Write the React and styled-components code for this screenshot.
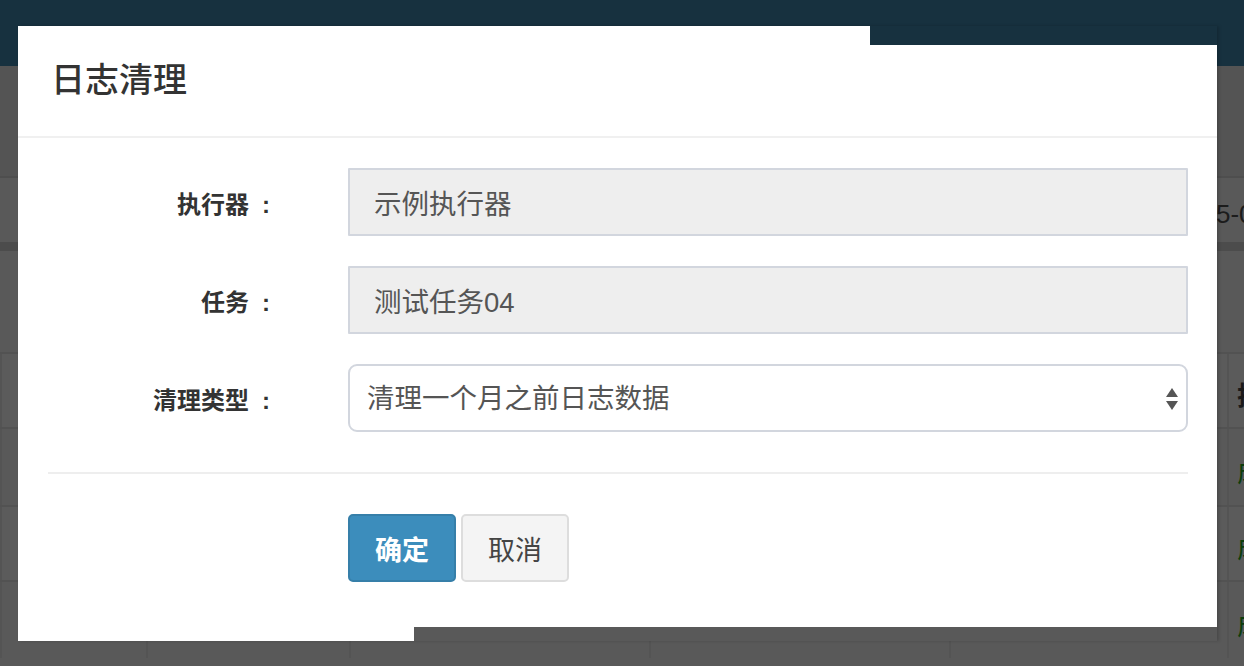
import styled, { createGlobalStyle } from "styled-components";

const GlobalStyle = createGlobalStyle`
  html, body {
    margin: 0;
    padding: 0;
    width: 1244px;
    height: 666px;
    overflow: hidden;
    background: #595959;
    font-family: "Liberation Sans", "Noto Sans CJK SC", sans-serif;
  }
  * { box-sizing: border-box; }
`;

const Stage = styled.div`
  position: relative;
  width: 1244px;
  height: 666px;
  overflow: hidden;
`;

/* page behind the dimmed backdrop */
const Page = styled.div`
  display: flex;
  flex-direction: column;
  width: 1244px;
  height: 666px;
  background: #595959;
`;

const TopBar = styled.div`
  height: 66px;
  background: #17313f;
`;

const Crumbs = styled.div`
  height: 112px;
  background: #545454;
  border-bottom: 2px solid #4e4e4e;
`;

const FilterRow = styled.div`
  display: grid;
  grid-template-columns: 1216px auto;
  align-items: center;
  height: 64px;
  padding-top: 8px;
  font-size: 26px;
  color: #1c1c1c;
  white-space: nowrap;
`;

const Band = styled.div`
  height: 9px;
  background: #4c4c4c;
`;

const Table = styled.div`
  margin-top: 101px;
  display: flex;
  flex-direction: column;
`;

const Row = styled.div`
  display: grid;
  grid-template-columns: 146px 203px 300px 300px 278px 200px;
  height: ${(p) => p.h}px;
  background: ${(p) => (p.alt ? "#5b5b5b" : "#595959")};
  border-top: 2px solid #525252;
`;

const Cell = styled.div`
  display: flex;
  align-items: center;
  padding: 6px 0 0 8px;
  border-left: 2px solid #545454;
  font-size: 26px;
  font-weight: ${(p) => (p.head ? 700 : 400)};
  color: ${(p) => (p.ok ? "#0c3d0c" : "#1a1a1a")};
  white-space: nowrap;
  overflow: hidden;
`;

/* modal */
const Modal = styled.div`
  position: absolute;
  left: 18px;
  top: 26px;
  width: 1199px;
  height: 615px;
  background: #fff;
  box-shadow: 2px 0 3px rgba(0, 0, 0, 0.18);
  display: flex;
  flex-direction: column;
`;

const Tear = styled.div`
  position: absolute;
  left: ${(p) => p.x}px;
  top: ${(p) => p.y}px;
  width: ${(p) => p.w}px;
  height: ${(p) => p.h}px;
  background: ${(p) => p.bg};
`;

const Header = styled.div`
  height: 112px;
  padding: 0 33px;
  display: flex;
  align-items: center;
  border-bottom: 2px solid #f0f0f0;
`;

const Title = styled.h4`
  margin: 0;
  font-size: 34px;
  font-weight: 500;
  color: #333;
  line-height: 1;
  padding-bottom: 2px;
`;

const Body = styled.div`
  padding: 30px 29px 0 30px;
  display: flex;
  flex-direction: column;
`;

const Form = styled.div`
  display: flex;
  flex-direction: column;
  gap: 30px;
`;

const FormRow = styled.div`
  display: grid;
  grid-template-columns: 300px 1fr;
  align-items: center;
`;

const Label = styled.label`
  text-align: right;
  padding-right: 78px;
  font-size: 24px;
  font-weight: 700;
  color: #333;
  white-space: nowrap;
`;

const Colon = styled.span`
  margin-left: 13px;
`;

const Input = styled.input`
  height: 68px;
  width: 100%;
  padding: 0 24px;
  font: inherit;
  font-size: 27.5px;
  color: #555;
  background: #eeeeee;
  border: 2px solid #d2d6de;
  border-radius: 1px;
  outline: none;
`;

const SelectWrap = styled.div`
  position: relative;
`;

const Select = styled.select`
  appearance: none;
  -webkit-appearance: none;
  height: 68px;
  width: 100%;
  padding: 0 40px 0 17px;
  font: inherit;
  font-size: 27.5px;
  color: #555;
  background: #fff;
  border: 2px solid #d2d6de;
  border-radius: 9px;
  outline: none;
`;

const Arrows = styled.svg`
  position: absolute;
  right: 9px;
  top: 23px;
  pointer-events: none;
`;

const Divider = styled.div`
  margin-top: 40px;
  height: 2px;
  background: #eeeeee;
`;

const Actions = styled.div`
  margin-top: 40px;
  padding-left: 300px;
  display: flex;
  gap: 5px;
`;

const Button = styled.button`
  width: 108px;
  height: 68px;
  border-radius: 5px;
  font: inherit;
  font-size: 27px;
  font-weight: ${(p) => (p.primary ? 700 : 400)};
  color: ${(p) => (p.primary ? "#fff" : "#444")};
  background: ${(p) => (p.primary ? "#3c8dbc" : "#f4f4f4")};
  border: 2px solid ${(p) => (p.primary ? "#367fa9" : "#dddddd")};
  cursor: pointer;
`;

const rows = [
  { h: 75, alt: true, head: true, last: "执行状态" },
  { h: 78, last: "成功" },
  { h: 75, alt: true, last: "成功" },
  { h: 78, last: "成功" },
];

export default function App() {
  return (
    <Stage>
      <GlobalStyle />
      <Page>
        <TopBar />
        <Crumbs />
        <FilterRow>
          <span />
          <span>5-01 00:00:00 - 2019-05-31</span>
        </FilterRow>
        <Band />
        <Table>
          {rows.map((r, i) => (
            <Row key={i} h={r.h} alt={r.alt}>
              <Cell head={r.head} />
              <Cell head={r.head} />
              <Cell head={r.head} />
              <Cell head={r.head} />
              <Cell head={r.head} />
              <Cell head={r.head} ok={!r.head}>
                {r.last}
              </Cell>
            </Row>
          ))}
        </Table>
      </Page>

      <Modal>
        <Header>
          <Title>日志清理</Title>
        </Header>
        <Body>
          <Form>
            <FormRow>
              <Label>
                执行器<Colon>:</Colon>
              </Label>
              <Input readOnly value="示例执行器" />
            </FormRow>
            <FormRow>
              <Label>
                任务<Colon>:</Colon>
              </Label>
              <Input readOnly value="测试任务04" />
            </FormRow>
            <FormRow>
              <Label>
                清理类型<Colon>:</Colon>
              </Label>
              <SelectWrap>
                <Select defaultValue="1">
                  <option value="1">清理一个月之前日志数据</option>
                  <option value="2">清理三个月之前日志数据</option>
                  <option value="3">清理六个月之前日志数据</option>
                </Select>
                <Arrows width="14" height="24" viewBox="0 0 14 24">
                  <path d="M7 1 L13 10 L1 10 Z" fill="#555" />
                  <path d="M1 14 L13 14 L7 23 Z" fill="#555" />
                </Arrows>
              </SelectWrap>
            </FormRow>
          </Form>
          <Divider />
          <Actions>
            <Button primary>确定</Button>
            <Button>取消</Button>
          </Actions>
        </Body>
      </Modal>
      <Tear x={870} y={26} w={347} h={19} bg="#17313f" />
      <Tear x={414} y={627} w={803} h={14} bg="#595959" />
    </Stage>
  );
}
